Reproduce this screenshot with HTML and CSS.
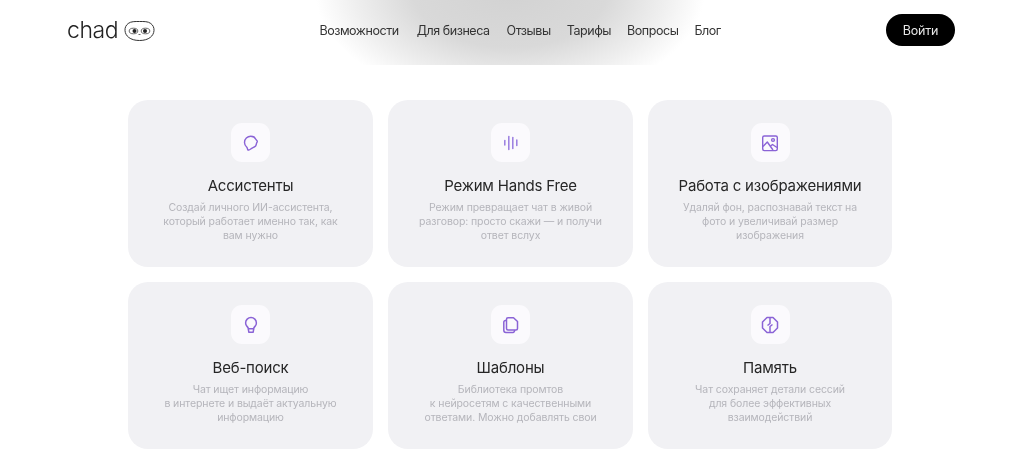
FILE: index.html
```html
<!DOCTYPE html>
<html lang="ru">
<head>
  <meta charset="UTF-8" />
  <meta name="viewport" content="width=device-width, initial-scale=1.0"/>
  <title>chad</title>
  <link rel="stylesheet" href="styles.css">
</head>
<body>

  <header class="header">
    <a class="logo" href="#">
      <span class="logo-text">chad</span>
      <svg class="logo-face" width="31" height="22" viewBox="0 0 31 22" fill="none">
        <path d="M15.500 1.500C20 1.500 24 1.300 26.800 3.500C29 5.200 30.200 7.600 30 10.500C29.700 15.800 25 20.500 15.500 20.500C6 20.500 1.300 15.800 1 10.500C0.800 7.600 2 5.200 4.200 3.500C7 1.300 11 1.500 15.500 1.500Z" stroke="#333" stroke-width="1"/>
        <ellipse cx="9.500" cy="11" rx="4.300" ry="2.800" stroke="#444" stroke-width="0.800"/>
        <ellipse cx="21.500" cy="11" rx="4.300" ry="2.800" stroke="#444" stroke-width="0.800"/>
        <circle cx="10.500" cy="11" r="2" fill="#222"/>
        <circle cx="21" cy="11" r="2" fill="#222"/>
        <path d="M14.500 14.500H16.500" stroke="#444" stroke-width="0.800"/>
      </svg>
    </a>

    <nav class="nav">
      <a href="#">Возможности</a>
      <a href="#">Для бизнеса</a>
      <a href="#">Отзывы</a>
      <a href="#">Тарифы</a>
      <a href="#">Вопросы</a>
      <a href="#">Блог</a>
    </nav>

    <a class="login" href="#">Войти</a>
  </header>

  <main class="cards">

    <section class="card">
      <div class="card-icon">
        <svg width="18" height="18" viewBox="0 0 18 18" fill="none">
          <path d="M5.800 15.800C5.400 15 5.500 14 4.800 13.200C3.500 12 2.500 10.400 2.500 8.400C2.500 4.800 5.300 2.200 8.800 2.200C11 2.200 13 3.200 13.800 5.200C14.100 6 14.800 6.300 15.200 7C15.600 7.800 14.800 8.300 14.600 9C14.400 10 14.300 11 13.600 12C12.800 13 11.500 13.500 10.300 14C9 14.500 8 15.900 6.800 16C6.400 16.100 6 16.100 5.800 15.800Z" stroke="#8a63d6" stroke-width="1.400" stroke-linejoin="round"/>
        </svg>
      </div>
      <h2>Ассистенты</h2>
      <p>Создай личного ИИ-ассистента,<br>который работает именно так, как<br>вам нужно</p>
    </section>

    <section class="card">
      <div class="card-icon">
        <svg width="18" height="18" viewBox="0 0 18 18" fill="none" stroke="#9a7de0" stroke-width="1.500" stroke-linecap="round">
          <path d="M2.800 6.500V11"/>
          <path d="M6.800 2.500V15.500"/>
          <path d="M10.800 3.500V14.500"/>
          <path d="M14.800 6V11.500"/>
        </svg>
      </div>
      <h2>Режим Hands Free</h2>
      <p>Режим превращает чат в живой<br>разговор: просто скажи — и получи<br>ответ вслух</p>
    </section>

    <section class="card">
      <div class="card-icon">
        <svg width="18" height="18" viewBox="0 0 18 18" fill="none" stroke="#8a63d6" stroke-width="1.400" stroke-linejoin="round">
          <rect x="1.700" y="2" width="14.600" height="14.600" rx="1.500"/>
          <circle cx="12" cy="6" r="1.400"/>
          <path d="M2 12.500L6.300 8L12 16"/>
          <path d="M9.500 12L11.500 10.500L16 13.500"/>
        </svg>
      </div>
      <h2>Работа с изображениями</h2>
      <p>Удаляй фон, распознавай текст на<br>фото и увеличивай размер<br>изображения</p>
    </section>

    <section class="card">
      <div class="card-icon">
        <svg width="18" height="18" viewBox="0 0 18 18" fill="none" stroke="#8a63d6" stroke-width="1.500" stroke-linejoin="round">
          <path d="M6.300 12.800C6.300 11.500 5.500 11 4.700 10C4 9.100 3.600 8 3.600 6.900C3.600 3.900 6 1.600 9 1.600C12 1.600 14.400 3.900 14.400 6.900C14.400 8 14 9.100 13.300 10C12.500 11 11.700 11.500 11.700 12.800Z"/>
          <path d="M6.300 12.800L6.800 16.200H11.200L11.700 12.800"/>
        </svg>
      </div>
      <h2>Веб-поиск</h2>
      <p>Чат ищет информацию<br>в интернете и выдаёт актуальную<br>информацию</p>
    </section>

    <section class="card">
      <div class="card-icon">
        <svg width="18" height="18" viewBox="0 0 18 18" fill="none" stroke="#8a63d6" stroke-width="1.500" stroke-linejoin="round">
          <path d="M6 1.700H11.500L15.500 5.500V12.500C15.500 13.500 14.800 14 14 14H6C5 14 4.500 13.400 4.500 12.500V3.200C4.500 2.300 5 1.700 6 1.700Z"/>
          <path d="M4.500 4.500H3.500C2.500 4.500 1.800 5.200 1.800 6.200V14.300C1.800 15.500 2.700 16.400 3.900 16.400H11C12 16.400 12.600 15.800 12.700 14"/>
        </svg>
      </div>
      <h2>Шаблоны</h2>
      <p>Библиотека промтов<br>к нейросетям с качественными<br>ответами. Можно добавлять свои</p>
    </section>

    <section class="card">
      <div class="card-icon">
        <svg width="18" height="18" viewBox="0 0 18 18" fill="none" stroke="#8a63d6" stroke-width="1.500" stroke-linejoin="round">
          <path d="M6 1.500H12L16.500 6V12L12 16.500H6L1.500 12V6Z"/>
          <path d="M9 1.500V7.500L6.500 9.500"/>
          <path d="M9 16.500V10.500L11.500 8.500"/>
        </svg>
      </div>
      <h2>Память</h2>
      <p>Чат сохраняет детали сессий<br>для более эффективных<br>взаимодействий</p>
    </section>

  </main>

</body>
</html>
```

FILE: styles.css
```css
* {
  box-sizing: border-box;
}

body {
  margin: 0;
  background: #fff;
  font-family: Inter, "Noto Sans", sans-serif;
  color: #222;
}

a {
  color: inherit;
  text-decoration: none;
}

.header {
  height: 65px;
  display: flex;
  align-items: center;
  justify-content: space-between;
  padding: 0 69px 5px 67px;
  background: radial-gradient(ellipse 195px 115px at 510px -10px, #d2d2d2 0%, #d9d9d9 50%, #efefef 80%, #fff 100%);
  filter: blur(0.35px);
}

.logo {
  display: flex;
  align-items: center;
  gap: 6px;
}

.logo-text {
  font-size: 23px;
  font-weight: 300;
  letter-spacing: -0.4px;
  color: #222;
}

.logo-face {
  margin-top: 1px;
}

.nav {
  display: flex;
  gap: 16px;
  margin-left: -1px;
  font-size: 12.500px;
  letter-spacing: -0.45px;
  color: #333;
}

.nav a:nth-child(1) {
  margin-right: 2px;
}

.nav a:nth-child(2) {
  margin-right: 1px;
}

.login {
  width: 69px;
  height: 32px;
  display: flex;
  align-items: center;
  justify-content: center;
  border-radius: 16px;
  background: #000;
  color: #e8e8e8;
  font-size: 12.500px;
  letter-spacing: -0.2px;
}

/* cards */
.cards {
  display: grid;
  grid-template-columns: 245px 245px 244px;
  grid-auto-rows: 167px;
  gap: 15px;
  justify-content: start;
  margin: 35px 0 0 128px;
  filter: blur(0.35px);
}

.card {
  display: flex;
  flex-direction: column;
  align-items: center;
  padding-top: 23px;
  border-radius: 20px;
  background: #f1f1f4;
  text-align: center;
}

.card-icon {
  width: 39px;
  height: 39px;
  display: flex;
  align-items: center;
  justify-content: center;
  border-radius: 11px;
  background: #fbfafd;
}

.card h2 {
  margin: 15px 0 6px;
  font-size: 15px;
  line-height: 18px;
  font-weight: 400;
  letter-spacing: -0.2px;
  color: #262626;
}

.card p {
  margin: 0;
  font-size: 10.500px;
  line-height: 14px;
  letter-spacing: -0.1px;
  color: #b5b5bb;
}
```
